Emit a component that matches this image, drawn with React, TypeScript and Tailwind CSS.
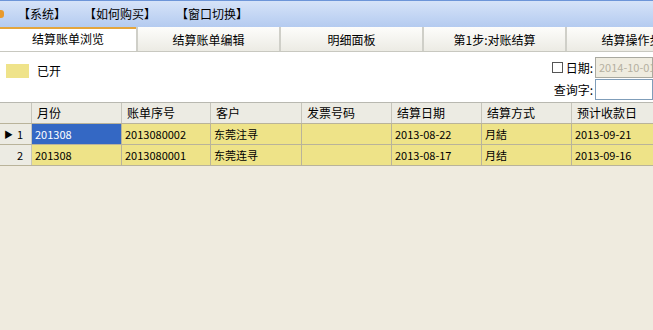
const cols = [
  { title: "月份", w: 90 },
  { title: "账单序号", w: 89 },
  { title: "客户", w: 91 },
  { title: "发票号码", w: 90 },
  { title: "结算日期", w: 90 },
  { title: "结算方式", w: 90 },
  { title: "预计收款日", w: 90 },
];

const rows = [
  ["201308", "2013080002", "东莞注寻", "", "2013-08-22", "月結", "2013-09-21"],
  ["201308", "2013080001", "东莞连寻", "", "2013-08-17", "月结", "2013-09-16"],
];

const tabs = ["结算账单浏览", "结算账单编辑", "明细面板", "第1步:对账结算", "结算操作步骤"];

export default function App() {
  return (
    <div className="h-[330px] w-[653px] overflow-hidden bg-[#efebdf] text-[12px] text-black [font-family:'Noto_Sans_CJK_SC',sans-serif]">
      {/* menu bar */}
      <div className="flex h-[27px] items-center border-t border-[#6d95d8] bg-gradient-to-b from-[#d6e3f8] to-[#b4cbf0]">
        <div className="ml-[-2px] h-[8px] w-[6px] rounded-sm bg-[#e99a2c]" />
        <span className="ml-[14px]">【系统】</span>
        <span className="ml-[18px]">【如何购买】</span>
        <span className="ml-[20px]">【窗口切换】</span>
      </div>

      {/* tabs */}
      <div className="flex h-[25px] border-b border-[#c8c8c0] bg-white">
        {tabs.map((t, i) => (
          <div
            key={t}
            className={
              i === 0
                ? "flex w-[136px] shrink-0 items-center justify-center border-t-2 border-[#e4a53c] bg-white pb-[2px]"
                : "flex w-[143px] shrink-0 items-center justify-center whitespace-nowrap border-l-2 border-[#cfcfc8] bg-gradient-to-b from-[#fdfdfb] to-[#ecebe4] pt-[2px]"
            }
          >
            {t}
          </div>
        ))}
      </div>

      {/* filter panel */}
      <div className="flex h-[50px] justify-between bg-white">
        <div className="flex items-start gap-[8px] pl-[6px] pt-[12px]">
          <div className="h-[14px] w-[23px] bg-[#efe38a]" />
          <span className="leading-[14px]">已开</span>
        </div>
        <div className="flex flex-col items-end gap-[1px] pt-[5px]">
          <div className="flex items-center">
            <div className="mr-[3px] h-[11px] w-[11px] border border-[#555]" />
            <span>日期:</span>
            <div className="ml-[2px] flex h-[21px] w-[58px] items-center overflow-hidden whitespace-nowrap border border-[#a9a9a0] bg-[#efece0] pl-[3px] text-[11px] text-[#b5b0a0]">
              2014-10-01
            </div>
          </div>
          <div className="flex items-center">
            <span>查询字:</span>
            <div className="ml-[2px] h-[21px] w-[58px] border border-[#7f9db9] bg-white" />
          </div>
        </div>
      </div>

      {/* grid */}
      <div className="border-t border-[#b8b8b0]">
        <div className="flex h-[20px] bg-[#ecebe3]">
          <div className="w-[32px] shrink-0 border-r border-[#c6c5bc]" />
          {cols.map((c) => (
            <div
              key={c.title}
              style={{ width: c.w }}
              className="flex shrink-0 items-center whitespace-nowrap border-r border-[#c6c5bc] pl-[5px]"
            >
              {c.title}
            </div>
          ))}
        </div>
        {rows.map((r, ri) => (
          <div key={ri} className="flex h-[21px] border-t border-[#b9b39a]">
            <div className="flex w-[32px] shrink-0 items-center justify-between border-r border-[#c6c5bc] bg-[#ecebe3] pl-[4px] pr-[8px]">
              <span className="text-[9px] leading-none">{ri === 0 ? "▶" : ""}</span>
              <span className="text-[11px]">{ri + 1}</span>
            </div>
            {r.map((v, ci) => (
              <div
                key={ci}
                style={{ width: cols[ci].w }}
                className={
                  ri === 0 && ci === 0
                    ? "flex shrink-0 items-center whitespace-nowrap border-r border-[#b9b39a] bg-[#3468c4] pl-[3px] text-[11px] text-white"
                    : "flex shrink-0 items-center whitespace-nowrap border-r border-[#b9b39a] bg-[#eee388] pl-[3px] text-[11px]"
                }
              >
                {v}
              </div>
            ))}
          </div>
        ))}
        <div className="h-[1px] w-[653px] border-t border-[#b9b39a]" />
      </div>
    </div>
  );
}
